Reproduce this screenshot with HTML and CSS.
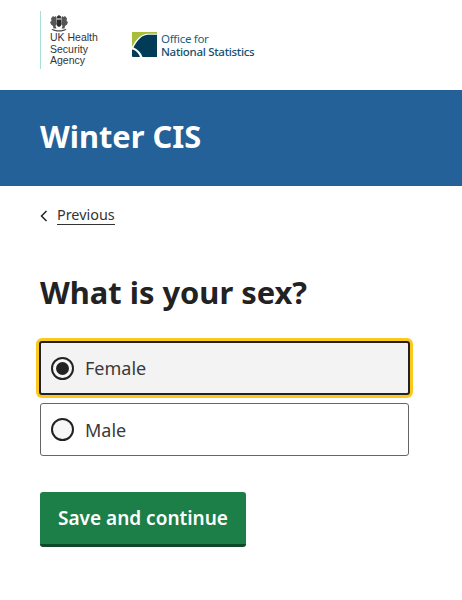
FILE: index.html
```html
<!DOCTYPE html>
<html lang="en">
<head>
    <meta charset="UTF-8">
    <meta name="viewport" content="width=device-width, initial-scale=1.0">
    <title>Winter CIS</title>
    <link rel="stylesheet" href="styles.css">
</head>
<body>
    <div class="logos">
        <div class="ukhsa">
            <svg class="crest" width="18" height="17" viewBox="0 0 18 17">
                <path d="M7 1.500 9 0l2 1.500.5 2h-5z" fill="#333"/>
                <path d="M3 1l1.500 1L6 1l.5 2.500L6 6l.5 3-1 2 1 2.500H3.500L3 11 1 9.500 0 7l1.500-1L1 3.500z" fill="#555"/>
                <path d="M15 1l-1.500 1L12 1l-.5 2.500L12 6l-.5 3 1 2-1 2.500h3L15 11l2-1.500L18 7l-1.500-1L17 3.500z" fill="#555"/>
                <path d="M6.500 4.500h5V9c0 1.500-1.200 2.500-2.500 3-1.300-.5-2.500-1.500-2.500-3z" fill="#2c2c2c"/>
                <path d="M1.500 14.500c2 1.500 4.500 2 7.500 2s5.500-.5 7.500-2l-1-.5c-2 1-4 1.300-6.500 1.300S4.500 15 2.500 14z" fill="#444"/>
            </svg>
            <div class="ukhsa-name">UK Health<br>Security<br>Agency</div>
        </div>
        <div class="ons">
            <svg width="25" height="25" viewBox="0 0 25 25">
                <path d="M0 0h25v1.800H15C8 2.500 4 8 0 15z" fill="#a8bd3a"/>
                <path d="M25 2.800H15.500C9 3.500 5 9 1.500 15.500 5.500 17 9 20.500 10.500 25H25z" fill="#003c57"/>
                <path d="M0 17.500c3.500.5 6.500 3.500 8 7.500H1a1 1 0 0 1-1-1z" fill="#003c57"/>
            </svg>
            <div class="ons-name">Office for<br><strong>National Statistics</strong></div>
        </div>
    </div>
    <header class="banner">Winter CIS</header>
    <main class="content">
        <a class="previous" href="#">
            <svg width="8" height="12" viewBox="0 0 8 12"><path d="M6.500 1 1.500 6l5 5" fill="none" stroke="#222" stroke-width="1.500"/></svg>
            <span>Previous</span>
        </a>
        <h1>What is your sex?</h1>
        <div class="options">
            <label class="option option-focus">
                <span class="radio radio-on"></span>
                Female
            </label>
            <label class="option">
                <span class="radio"></span>
                Male
            </label>
        </div>
        <button class="save">Save and continue</button>
    </main>
</body>
</html>
```

FILE: styles.css
```css
* {
    margin: 0;
    padding: 0;
    box-sizing: border-box;
}

body {
    font-family: "Noto Sans", "Open Sans", sans-serif;
    background-color: #fff;
    color: #222;
}

.logos {
    height: 90px;
    padding: 11px 0 0 40px;
    display: flex;
    align-items: flex-start;
}

.ukhsa {
    width: 82px;
    height: 58px;
    padding-left: 9px;
    border-left: 1px solid #a8e0d8;
}

.crest {
    display: block;
    margin: 4px 0 0;
}

.ukhsa-name {
    font-family: "Liberation Sans", Arial, sans-serif;
    font-size: 10.500px;
    line-height: 11.500px;
    color: #333;
}

.ons {
    margin: 21px 0 0 10px;
    display: flex;
    gap: 4px;
}

.ons-name {
    font-size: 11.500px;
    line-height: 13px;
    color: #1e5f7f;
    letter-spacing: -0.3px;
}

.ons-name strong {
    font-weight: 500;
    color: #14506e;
}

.banner {
    height: 96px;
    padding: 26px 40px 0;
    background-color: #236198;
    color: #fff;
    font-size: 30.800px;
    line-height: 40px;
    font-weight: 700;
}

.content {
    padding: 20px 53px 0 40px;
}

.previous {
    display: flex;
    align-items: center;
    gap: 9px;
    height: 19px;
    color: #333;
    font-size: 14.400px;
    text-decoration: none;
}

.previous span {
    border-bottom: 1px solid #333;
    line-height: 18px;
}

h1 {
    margin-top: 47px;
    font-size: 30.850px;
    line-height: 40px;
    font-weight: 700;
    color: #222;
}

.options {
    margin-top: 29px;
    display: flex;
    flex-direction: column;
    gap: 8px;
}

.option {
    display: flex;
    align-items: center;
    gap: 11px;
    height: 53px;
    padding-left: 10px;
    border: 1px solid #666;
    border-radius: 3px;
    font-size: 18px;
    color: #3a3a3a;
}

.option-focus {
    height: 54px;
    margin: 0 -1px;
    background-color: #f3f3f3;
    border: 2px solid #222;
    box-shadow: 0 0 0 3px #fcc81e;
}

.radio {
    width: 23px;
    height: 23px;
    border: 2px solid #222;
    border-radius: 50%;
    background-color: #f7f7f7;
    display: flex;
    align-items: center;
    justify-content: center;
}

.radio-on::after {
    content: "";
    width: 13px;
    height: 13px;
    border-radius: 50%;
    background-color: #222;
}

.save {
    margin-top: 36px;
    width: 206px;
    height: 55px;
    background-color: #1c7f48;
    border: none;
    border-bottom: 3px solid #0e4a28;
    border-radius: 3px;
    color: #fff;
    font-family: inherit;
    font-size: 19px;
    font-weight: 600;
}
```
